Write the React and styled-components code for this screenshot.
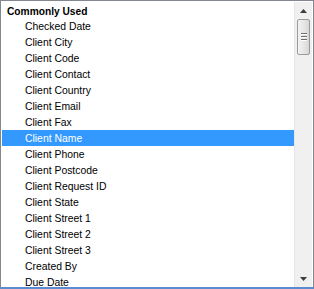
import React from 'react';
import styled, { createGlobalStyle } from "styled-components";

const Global = createGlobalStyle`
  html, body {
    margin: 0;
    padding: 0;
    background: #ffffff;
  }
`;

const Frame = styled.div`
  width: 314px;
  height: 289px;
  box-sizing: border-box;
  display: flex;
  flex-direction: row;
  border: 1px solid #828790;
  border-bottom: 2px solid #5a8ad0;
  padding: 1px 1px 0 1px;
  background: #ffffff;
  overflow: hidden;
  font-family: "Liberation Sans", Arial, sans-serif;
`;

const List = styled.div`
  flex: 1;
  display: flex;
  flex-direction: column;
  overflow: hidden;
`;

const Group = styled.div`
  flex: none;
  height: 14px;
  padding-top: 2px;
  line-height: 16px;
  padding-left: 5px;
  font-size: 10.2px;
  font-weight: bold;
  color: #000000;
  white-space: nowrap;
`;

const Option = styled.div`
  flex: none;
  height: 16px;
  line-height: 17px;
  padding-left: 23px;
  font-size: 10.4px;
  color: ${p => (p.selected ? "#ffffff" : "#000000")};
  background: ${p => (p.selected ? "#3399ff" : "transparent")};
  white-space: nowrap;
`;

const ScrollBar = styled.div`
  width: 17px;
  flex: none;
  display: flex;
  flex-direction: column;
  align-items: center;
  background: #f0f0f0;
  border-left: 1px solid #e6e6e6;
`;

const Arrow = styled.div`
  height: 17px;
  width: 100%;
  display: flex;
  align-items: center;
  justify-content: center;
`;

const Track = styled.div`
  flex: 1;
  width: 100%;
  display: flex;
  flex-direction: column;
  align-items: center;
`;

const Thumb = styled.div`
  width: 13px;
  height: 36px;
  box-sizing: border-box;
  border: 1px solid #9a9a9a;
  border-radius: 2px;
  background: linear-gradient(to right, #f3f3f3, #e4e4e4 60%, #d6d6d6);
  display: flex;
  flex-direction: column;
  align-items: center;
  justify-content: center;
  gap: 1px;
`;

const Grip = styled.div`
  width: 6px;
  height: 1px;
  background: #6e6e6e;
  border-bottom: 1px solid #ffffff;
`;

const items = [
  "Checked Date",
  "Client City",
  "Client Code",
  "Client Contact",
  "Client Country",
  "Client Email",
  "Client Fax",
  "Client Name",
  "Client Phone",
  "Client Postcode",
  "Client Request ID",
  "Client State",
  "Client Street 1",
  "Client Street 2",
  "Client Street 3",
  "Created By",
  "Due Date",
];

export default function App() {
  return (
    <>
      <Global />
      <Frame>
        <List>
          <Group>Commonly Used</Group>
          {items.map(name => (
            <Option key={name} selected={name === "Client Name"}>{name}</Option>
          ))}
        </List>
        <ScrollBar>
          <Arrow>
            <svg width="7" height="4" viewBox="0 0 7 4">
              <path d="M3.5 0 L7 4 L0 4 Z" fill="#3c3c3c" />
            </svg>
          </Arrow>
          <Track>
            <Thumb>
              <Grip />
              <Grip />
              <Grip />
            </Thumb>
          </Track>
          <Arrow>
            <svg width="7" height="4" viewBox="0 0 7 4">
              <path d="M0 0 L7 0 L3.5 4 Z" fill="#3c3c3c" />
            </svg>
          </Arrow>
        </ScrollBar>
      </Frame>
    </>
  );
}
